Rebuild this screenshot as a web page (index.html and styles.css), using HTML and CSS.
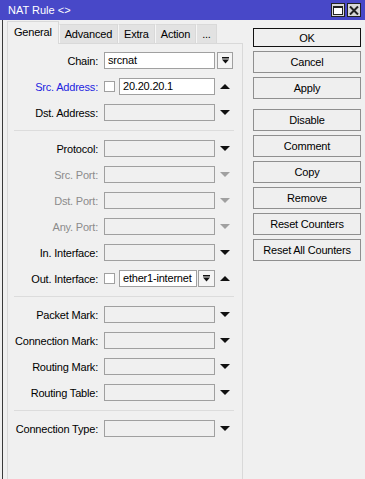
FILE: index.html
```html
<!DOCTYPE html>
<html lang="en">
<head>
  <meta charset="UTF-8">
  <title>NAT Rule</title>
  <link rel="stylesheet" href="styles.css">
</head>
<body>
  <div class="titlebar">
    <span class="title">NAT Rule &lt;&gt;</span>
    <div class="winbtns">
      <span class="winbtn">
        <svg width="10" height="9" viewBox="0 0 10 9"><rect x="0.5" y="0.5" width="9" height="8" fill="#fff" stroke="#222"/><rect x="0" y="0" width="10" height="2" fill="#222"/></svg>
      </span>
      <span class="winbtn">
        <svg width="10" height="9" viewBox="0 0 10 9"><path d="M1 0.5L9 8.5M9 0.5L1 8.5" stroke="#222" stroke-width="2"/></svg>
      </span>
    </div>
  </div>

  <div class="frame">
    <div class="left">
      <div class="tabs">
        <span class="tab active">General</span>
        <span class="tab">Advanced</span>
        <span class="tab">Extra</span>
        <span class="tab">Action</span>
        <span class="tab">...</span>
      </div>

      <div class="panel">
        <div class="row">
          <label>Chain:</label>
          <div class="field"><span class="input white">srcnat</span></div>
          <span class="dropbtn">
            <svg width="7" height="7" viewBox="0 0 7 7"><rect x="0" y="0" width="7" height="1.5" fill="#111"/><path d="M0 2.5h7L3.5 6.5z" fill="#111"/></svg>
          </span>
        </div>
        <div class="row">
          <label class="blue">Src. Address:</label>
          <div class="field"><span class="check"></span><span class="input white">20.20.20.1</span></div>
          <span class="tri up"></span>
        </div>
        <div class="row">
          <label>Dst. Address:</label>
          <div class="field"><span class="input"></span></div>
          <span class="tri"></span>
        </div>

        <hr class="sep">

        <div class="row">
          <label>Protocol:</label>
          <div class="field"><span class="input"></span></div>
          <span class="tri"></span>
        </div>
        <div class="row">
          <label class="muted">Src. Port:</label>
          <div class="field"><span class="input"></span></div>
          <span class="tri muted"></span>
        </div>
        <div class="row">
          <label class="muted">Dst. Port:</label>
          <div class="field"><span class="input"></span></div>
          <span class="tri muted"></span>
        </div>
        <div class="row">
          <label class="muted">Any. Port:</label>
          <div class="field"><span class="input"></span></div>
          <span class="tri muted"></span>
        </div>
        <div class="row">
          <label>In. Interface:</label>
          <div class="field"><span class="input"></span></div>
          <span class="tri"></span>
        </div>
        <div class="row">
          <label>Out. Interface:</label>
          <div class="field">
            <span class="check"></span>
            <span class="input white">ether1-internet</span>
            <span class="dropbtn small">
              <svg width="7" height="7" viewBox="0 0 7 7"><rect x="0" y="0" width="7" height="1.5" fill="#111"/><path d="M0 2.5h7L3.5 6.5z" fill="#111"/></svg>
            </span>
          </div>
          <span class="tri up"></span>
        </div>

        <hr class="sep">

        <div class="row">
          <label>Packet Mark:</label>
          <div class="field"><span class="input"></span></div>
          <span class="tri"></span>
        </div>
        <div class="row">
          <label>Connection Mark:</label>
          <div class="field"><span class="input"></span></div>
          <span class="tri"></span>
        </div>
        <div class="row">
          <label>Routing Mark:</label>
          <div class="field"><span class="input"></span></div>
          <span class="tri"></span>
        </div>
        <div class="row">
          <label>Routing Table:</label>
          <div class="field"><span class="input"></span></div>
          <span class="tri"></span>
        </div>

        <hr class="sep">

        <div class="row">
          <label>Connection Type:</label>
          <div class="field"><span class="input"></span></div>
          <span class="tri"></span>
        </div>
      </div>
    </div>

    <div class="actions">
      <button class="btn default">OK</button>
      <button class="btn">Cancel</button>
      <button class="btn">Apply</button>
      <button class="btn spaced">Disable</button>
      <button class="btn">Comment</button>
      <button class="btn">Copy</button>
      <button class="btn">Remove</button>
      <button class="btn">Reset Counters</button>
      <button class="btn">Reset All Counters</button>
    </div>
  </div>
</body>
</html>
```

FILE: styles.css
```css
:root {
  --bg: #f0f0f0;
  --title: #4848c8;
  --edge: #a0a0a0;
  --line: #d9d9d9;
  --muted: #8c8c8c;
  --blue: #1d1de0;
}

html, body {
  height: 100%;
}

body {
  margin: 0;
  background: var(--bg);
  font-family: "Liberation Sans", Arial, sans-serif;
  font-size: 11px;
  letter-spacing: -0.2px;
  color: #000;
  display: flex;
  flex-direction: column;
  overflow: hidden;
}

/* title bar */
.titlebar {
  height: 20px;
  flex: none;
  background: var(--title);
  display: flex;
  align-items: center;
  justify-content: space-between;
  padding: 0 4px 0 8px;
}

.title {
  color: #fff;
  font-size: 11px;
  letter-spacing: 0;
}

.winbtns {
  display: flex;
  gap: 2px;
}

.winbtn {
  width: 12px;
  height: 12px;
  border: 1px solid #222;
  background: #d8d8d8;
  display: flex;
  align-items: center;
  justify-content: center;
}

/* window body */
.frame {
  flex: 1;
  display: flex;
  margin-left: 2px;
  border-left: 1px solid #3a3a3a;
  padding: 2px 0 0 4px;
}

.left {
  width: 236px;
  display: flex;
  flex-direction: column;
}

.tabs {
  display: flex;
  align-items: flex-end;
  height: 21px;
}

.tab {
  height: 18px;
  line-height: 18px;
  padding: 0 5px;
  background: #e2e2e2;
  border: 1px solid var(--line);
  border-bottom: none;
  border-left-color: #f6f6f6;
}

.tab.active {
  height: 22px;
  line-height: 20px;
  margin-bottom: -1px;
  padding: 0 6px;
  background: var(--bg);
  border-left-color: var(--line);
  position: relative;
}

.panel {
  flex: 1;
  border: 1px solid var(--line);
  border-bottom: none;
  padding-top: 8px;
}

.row {
  display: grid;
  grid-template-columns: 96px 111px 20px;
  align-items: center;
  height: 17px;
  margin-bottom: 9px;
}

.row label {
  text-align: right;
  padding-right: 6px;
  white-space: nowrap;
}

.row label.blue {
  color: var(--blue);
}

.row label.muted {
  color: var(--muted);
}

.field {
  display: flex;
  align-items: center;
  height: 17px;
}

.input {
  flex: 1;
  height: 17px;
  box-sizing: border-box;
  border: 1px solid var(--edge);
  padding: 0 3px;
  line-height: 15px;
  white-space: nowrap;
  overflow: hidden;
}

.input.white {
  background: #fff;
}

.check {
  width: 11px;
  height: 11px;
  box-sizing: border-box;
  border: 1px solid var(--edge);
  background: #fff;
  margin-right: 4px;
  flex: none;
}

.dropbtn {
  width: 16px;
  height: 17px;
  box-sizing: border-box;
  margin-left: 2px;
  border: 1px solid var(--edge);
  background: #f5f5f5;
  display: flex;
  align-items: center;
  justify-content: center;
}

.dropbtn.small {
  width: 17px;
  margin-left: 1px;
  flex: none;
}

.tri {
  justify-self: center;
  width: 0;
  height: 0;
  border-left: 5px solid transparent;
  border-right: 5px solid transparent;
  border-top: 5px solid #111;
}

.tri.up {
  border-top: none;
  border-bottom: 5px solid #111;
}

.tri.muted {
  border-top-color: #a0a0a0;
}

.sep {
  border: none;
  border-top: 1px solid #dcdcdc;
  margin: 0 8px 9px 6px;
}

/* buttons column */
.actions {
  width: 108px;
  margin-left: 10px;
  padding-top: 6px;
  display: flex;
  flex-direction: column;
  gap: 4px;
}

.btn {
  height: 22px;
  font-family: inherit;
  font-size: 11px;
  letter-spacing: -0.2px;
  color: #000;
  background: #efefef;
  border: 1px solid #8f8f8f;
  padding: 0;
}

.btn.default {
  border-color: #111;
  height: 19px;
}

.btn.spaced {
  margin-top: 6px;
}
```
